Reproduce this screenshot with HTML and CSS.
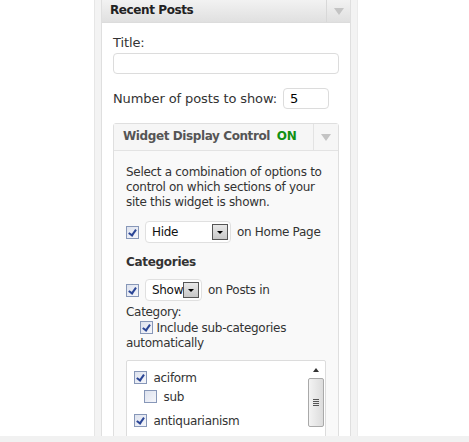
FILE: index.html
```html
<!DOCTYPE html>
<html>
<head>
    <title>Widgets</title>
    <link rel="stylesheet" href="styles.css">
</head>
<body>
    <div class="sidebar">
        <div class="widget">
            <div class="widget-top">
                <h4>Recent Posts</h4>
                <span class="toggle"><span class="arrow"></span></span>
            </div>
            <div class="widget-inside">
                <label class="field-label">Title:</label>
                <div class="text-input wide"></div>
                <div class="number-row">
                    <span>Number of posts to show:</span>
                    <div class="text-input small">5</div>
                </div>

                <div class="wdc">
                    <div class="wdc-top">
                        <span class="wdc-title">Widget Display Control <span class="on">ON</span></span>
                        <span class="toggle"><span class="arrow"></span></span>
                    </div>
                    <div class="wdc-body">
                        <p class="intro">Select a combination of options to control on which sections of your site this widget is shown.</p>

                        <div class="option-row">
                            <span class="check checked"></span>
                            <span class="select hide-select">Hide<span class="drop"></span></span>
                            <span>on Home Page</span>
                        </div>

                        <h5>Categories</h5>
                        <div class="option-row">
                            <span class="check checked"></span>
                            <span class="select show-select">Show<span class="drop"></span></span>
                            <span>on Posts in</span>
                        </div>
                        <div class="category-text">
                            Category:<br>
                            <span class="indent"><span class="check checked"></span> Include sub-categories</span><br>
                            automatically
                        </div>

                        <div class="listbox">
                            <ul class="cat-list">
                                <li><span class="check checked"></span> aciform</li>
                                <li class="child"><span class="check"></span> sub</li>
                                <li class="gap"><span class="check checked"></span> antiquarianism</li>
                            </ul>
                            <div class="scrollbar">
                                <span class="up"></span>
                                <span class="thumb"><span class="grip"></span></span>
                            </div>
                        </div>
                    </div>
                </div>
            </div>
        </div>
    </div>
    <div class="hscroll"></div>
</body>
</html>
```

FILE: styles.css
```css
html, body {
    margin: 0;
    padding: 0;
    background: #fff;
    height: 442px;
    overflow: hidden;
}
body {
    font-family: "DejaVu Sans", Verdana, sans-serif;
    font-size: 12px;
    letter-spacing: -0.3px;
    color: #333;
}
.sidebar {
    margin-left: 94px;
    width: 250px;
    height: 436px;
    padding: 0 6px;
    background: #f3f3f3;
    border-left: 1px solid #e6e6e6;
    border-right: 1px solid #ebebeb;
    overflow: hidden;
}
.widget {
    background: #fff;
    border: 1px solid #dfdfdf;
    border-top: none;
    height: 440px;
}
.widget-top {
    display: flex;
    height: 22px;
    background: linear-gradient(#f2f2f2, #e0e0e0);
    border-bottom: 1px solid #dcdcdc;
}
.widget-top h4 {
    flex: 1;
    margin: 0;
    padding: 3px 0 0 8px;
    font-size: 12px;
    letter-spacing: -0.4px;
    font-weight: bold;
    color: #222;
}
.toggle {
    width: 23px;
    border-left: 1px solid #d8d8d8;
    display: flex;
    align-items: center;
    justify-content: center;
}
.arrow {
    width: 0;
    height: 0;
    border-left: 5px solid transparent;
    border-right: 5px solid transparent;
    border-top: 7px solid #c4c4c4;
}
.widget-inside {
    padding: 12px 11px 0 11px;
}
.field-label {
    display: block;
    font-size: 13px;
    letter-spacing: -0.1px;
    line-height: 16px;
    margin-bottom: 2px;
}
.text-input {
    box-sizing: border-box;
    height: 21px;
    border: 1px solid #dcdcdc;
    border-radius: 4px;
    background: #fff;
    font-size: 13px;
    line-height: 19px;
    padding-left: 6px;
    color: #000;
}
.text-input.wide {
    width: 226px;
}
.number-row {
    display: flex;
    align-items: center;
    gap: 6px;
    margin-top: 14px;
    font-size: 13px;
    letter-spacing: -0.1px;
}
.text-input.small {
    width: 46px;
}
.wdc {
    margin-top: 14px;
    width: 224px;
    border: 1px solid #dfdfdf;
    border-radius: 3px;
    background: #f9f9f9;
}
.wdc-top {
    display: flex;
    height: 26px;
    border-bottom: 1px solid #e3e3e3;
    background: #f6f6f6;
}
.wdc-title {
    flex: 1;
    padding: 5px 0 0 9px;
    font-weight: bold;
    letter-spacing: -0.4px;
    color: #555;
}
.wdc-title .on {
    color: #129112;
    margin-left: 3px;
}
.wdc .toggle {
    width: 24px;
    border-left-color: #e3e3e3;
}
.wdc-body {
    padding: 14px 12px 0 12px;
    line-height: 15px;
}
.intro {
    margin: 0 0 11px 0;
}
.option-row {
    display: flex;
    align-items: center;
    gap: 6px;
    height: 22px;
}
.check {
    display: inline-block;
    box-sizing: border-box;
    width: 13px;
    height: 13px;
    border: 1px solid #8797b8;
    background: linear-gradient(135deg, #dde2ee, #f5f6fa);
    vertical-align: -2px;
    position: relative;
}
.check.checked::after {
    content: "";
    position: absolute;
    left: 3px;
    top: 1px;
    width: 3px;
    height: 6px;
    border: solid #2a4596;
    border-width: 0 2px 2px 0;
    transform: rotate(35deg);
}
.select {
    box-sizing: border-box;
    position: relative;
    height: 22px;
    border: 1px solid #e0e0e0;
    border-radius: 4px;
    background: #fff;
    padding: 3px 0 0 6px;
    color: #111;
}
.hide-select {
    width: 86px;
}
.show-select {
    width: 57px;
}
.drop {
    position: absolute;
    right: 2px;
    top: 2px;
    box-sizing: border-box;
    width: 16px;
    height: 16px;
    border: 1px solid #555;
    background: linear-gradient(#e8e8e8, #c8c8c8);
}
.drop::after {
    content: "";
    position: absolute;
    left: 4px;
    top: 6px;
    border-left: 3px solid transparent;
    border-right: 3px solid transparent;
    border-top: 3px solid #000;
}
h5 {
    margin: 12px 0 9px 0;
    font-size: 12px;
    font-weight: bold;
    color: #333;
}
.category-text {
    margin-top: 4px;
    line-height: 15.5px;
}
.indent {
    padding-left: 14px;
}
.listbox {
    display: flex;
    margin-top: 8px;
    width: 198px;
    height: 90px;
    border: 1px solid #dcdcdc;
    border-radius: 2px;
    background: #fff;
}
.cat-list {
    flex: 1;
    list-style: none;
    margin: 0;
    padding: 8px 0 0 7px;
    line-height: 19px;
}
.cat-list .check {
    margin-right: 3px;
}
.cat-list .child {
    padding-left: 10px;
}
.cat-list .gap {
    margin-top: 5px;
}
.scrollbar {
    width: 17px;
    margin-right: 1px;
    display: flex;
    flex-direction: column;
    align-items: center;
}
.up {
    margin-top: 7px;
    border-left: 3px solid transparent;
    border-right: 3px solid transparent;
    border-bottom: 4px solid #333;
}
.thumb {
    box-sizing: border-box;
    margin-top: 6px;
    width: 16px;
    height: 49px;
    border: 1px solid #a9a9a9;
    border-radius: 2px;
    background: linear-gradient(90deg, #f3f3f3, #dcdcdc);
    display: flex;
    align-items: center;
    justify-content: center;
}
.grip {
    width: 6px;
    height: 7px;
    background: repeating-linear-gradient(#555 0 1px, transparent 1px 2px);
}
.hscroll {
    height: 6px;
    background: #f1f1f1;
}
```
